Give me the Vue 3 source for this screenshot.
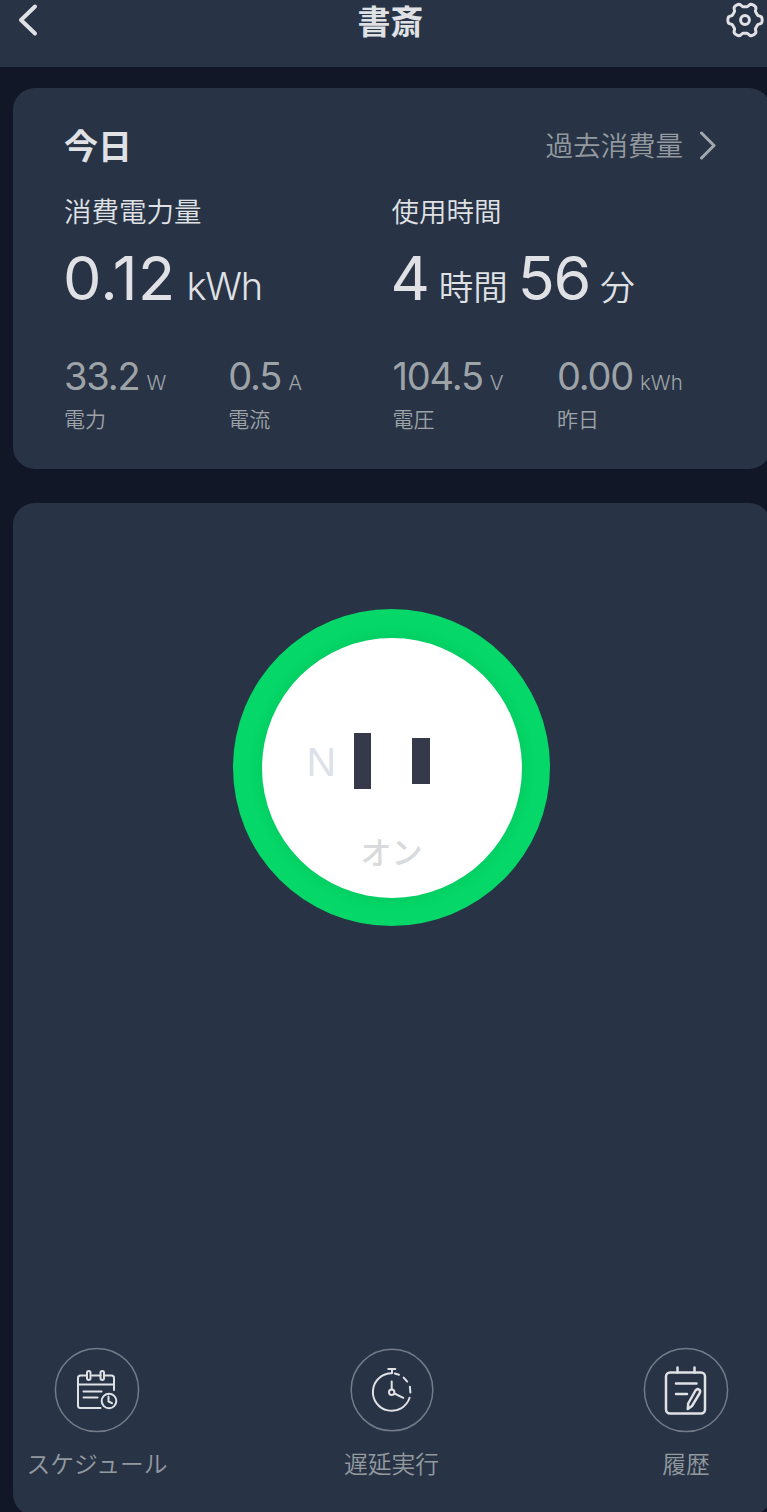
<script setup>
const today = [
  { label: '消費電力量', parts: [{ value: '0.12', unit: 'kWh' }] },
  { label: '使用時間', parts: [{ value: '4', unit: '時間', cjk: true }, { value: '56', unit: '分', cjk: true }] },
]

const stats = [
  { value: '33.2', unit: 'W', label: '電力' },
  { value: '0.5', unit: 'A', label: '電流' },
  { value: '104.5', unit: 'V', label: '電圧' },
  { value: '0.00', unit: 'kWh', label: '昨日' },
]

// Six-toothed gear outline, teeth at 0°, 60°, 120°…
const gear = Array.from({ length: 120 }, (_, i) => {
  const a = (i / 120) * Math.PI * 2
  const r = 15.2 + 1.9 * (Math.tanh(2.2 * Math.cos(6 * a)) / Math.tanh(2.2))
  return `${(20 + r * Math.cos(a)).toFixed(2)},${(20 + r * Math.sin(a)).toFixed(2)}`
}).join(' ')
</script>

<template>
  <div class="screen">
    <header class="bar">
      <svg class="back" width="24" height="36" viewBox="0 0 24 36"><path d="M19 5.500 5 19 19 32.500" /></svg>
      <h1>書斎</h1>
      <svg class="gear" width="40" height="40" viewBox="0 0 40 40">
        <polygon :points="gear" />
        <circle cx="20" cy="20" r="4.4" />
      </svg>
    </header>

    <section class="card usage">
      <div class="head">
        <h2>今日</h2>
        <div class="past">
          <span>過去消費量</span>
          <svg width="18" height="30" viewBox="0 0 18 30"><path d="M2.5 3 15 15.5 2.5 28" /></svg>
        </div>
      </div>
      <div class="today">
        <div v-for="t in today" :key="t.label">
          <div class="label">{{ t.label }}</div>
          <div class="big">
            <template v-for="p in t.parts" :key="p.unit">
              <span class="num" :class="{ tight: p.cjk }">{{ p.value }}</span><span class="unit" :class="{ cjk: p.cjk }">{{ p.unit }}</span>
            </template>
          </div>
        </div>
      </div>
      <div class="stats">
        <div v-for="s in stats" :key="s.label">
          <div class="reading"><span class="num">{{ s.value }}</span><span class="unit">{{ s.unit }}</span></div>
          <div class="name">{{ s.label }}</div>
        </div>
      </div>
    </section>

    <section class="card control">
      <div class="ring">
        <div class="plug">
          <div class="slots">
            <span class="neutral">N</span>
            <i class="slot tall"></i>
            <i class="slot"></i>
          </div>
          <div class="state">オン</div>
        </div>
      </div>

      <nav class="actions">
        <div class="action">
          <svg width="86" height="86" viewBox="0 0 86 86">
            <circle class="rim" cx="43" cy="43" r="41.6" />
            <g class="ink">
              <path d="M32 28.5h-5.500a2.500 2.500 0 0 0-2.500 2.500v27.500a2.500 2.500 0 0 0 2.500 2.500h20M38 28.500h8.500M51.500 28.500h6a2.500 2.500 0 0 1 2.500 2.500v12M24 37.500h36M29.500 44.500h18M29.500 50.500h14" />
              <rect x="33" y="24" width="3.500" height="9" rx="1.750" />
              <rect x="46.500" y="24" width="3.500" height="9" rx="1.750" />
              <circle cx="55" cy="54" r="7.300" />
              <path d="M54.500 49.500v5l3.500 1.700" />
            </g>
          </svg>
          <span>スケジュール</span>
        </div>
        <div class="action">
          <svg width="86" height="86" viewBox="0 0 86 86">
            <circle class="rim" cx="43" cy="43" r="40.800" />
            <g class="ink">
              <path d="M42.700 26.200A18.800 18.800 0 1 0 60.600 50.800" />
              <path d="M45.800 26.500 50 27.700M54.700 30.600 58.200 34.600M60.900 39.800 61.400 45.500" />
              <path d="M39.300 22h7M43 22v4M42.700 34.500v8M45.400 46.500 54.300 50.800" />
              <circle cx="42.700" cy="45.200" r="2.700" />
            </g>
          </svg>
          <span>遅延実行</span>
        </div>
        <div class="action">
          <svg width="86" height="86" viewBox="0 0 86 86">
            <circle class="rim" cx="43" cy="43" r="41.600" />
            <g class="ink bold">
              <rect x="23" y="25.500" width="39" height="41" rx="4" />
              <path d="M34.500 20.500v5M51.500 20.500v5M33 36.500h20.500M33 47h11" />
              <path d="M52.500 43.500q1.800-2.200 3.800-.8 1.600 1.300.2 3.800l-7.500 12.500-4.200 3 .4-5.500z" />
            </g>
          </svg>
          <span>履歴</span>
        </div>
      </nav>
    </section>
  </div>
</template>

<style>
html, body { margin: 0; background: #121727; }
</style>

<style scoped>
.screen {
  width: 767px; height: 1512px; overflow: hidden; background: #121727; color: #dfe1e5;
  font-family: Inter, "Noto Sans CJK JP", sans-serif;
}
svg { display: block; flex: none; fill: none; stroke: #dfe1e5; stroke-linecap: round; stroke-linejoin: round; }
h1, h2 { margin: 0; font-family: "Liberation Sans", "Noto Sans CJK JP", sans-serif; font-weight: 700; }
.bar {
  height: 67px; box-sizing: border-box; padding: 0 2px 0 16px; background: #293346;
  display: grid; grid-template-columns: 1fr auto 1fr; align-items: start;
}
.bar h1 { font-size: 33px; line-height: 38px; padding-top: 4px; }
.back { margin-top: 1px; stroke-width: 4; }
.gear { justify-self: end; stroke-width: 3; }
.card { width: 758px; box-sizing: border-box; margin-left: 13px; border-radius: 22px; background: #293346; }
.usage { height: 381px; margin-top: 21px; padding: 32px 50px 0 51px; }
.head { display: flex; justify-content: space-between; align-items: center; height: 50px; }
.head h2 { font-size: 34px; line-height: 50px; padding-top: 3px; }
.past { display: flex; align-items: center; gap: 16px; font-size: 27.5px; font-weight: 350; color: #929a9f; margin-right: 4px; }
.past span { line-height: 40px; padding-top: 1px; }
.past svg { stroke: #a2a9ae; stroke-width: 3; }
.today { display: grid; grid-template-columns: 327.500px 1fr; margin-top: 22px; }
.label { font-size: 27.5px; line-height: 40px; font-weight: 350; }
.big { display: flex; align-items: baseline; line-height: 70px; margin: 11px 0 0 -1px; height: 70px; white-space: nowrap; }
.big .num { font-size: 61px; letter-spacing: .3px; }
.big .num.tight { letter-spacing: -1.200px; }
.big .unit { font-size: 38px; font-weight: 350; letter-spacing: -1.200px; margin: 0 10px 0 11px; }
.big .unit.cjk { font-size: 34.5px; letter-spacing: 0; margin: 0 10px; }
.stats { display: grid; grid-template-columns: repeat(4, 164.3px); margin-top: 40px; color: #9da3a6; }
.reading { display: flex; align-items: baseline; line-height: 46px; height: 46px; }
.reading .num { font-size: 38px; letter-spacing: -1.200px; }
.reading .unit { font-size: 20.500px; margin-left: 7px; font-weight: 350; }
.name { font-size: 21px; line-height: 30px; margin-top: 6px; font-weight: 350; }
.control {
  height: 1013px; margin-top: 34px; padding-top: 106px;
  display: flex; flex-direction: column; align-items: center;
}
.ring {
  width: 317px; height: 317px; border-radius: 50%; background: #05d768; margin-right: 1px;
  display: flex; align-items: center; justify-content: center;
}
.plug {
  width: 260px; height: 260px; border-radius: 50%; background: #fff; box-shadow: 0 0 14px rgba(0, 90, 40, .14);
  display: flex; flex-direction: column;
}
.slots { display: flex; align-items: center; height: 56px; margin: 95px 0 0 45px; }
.neutral { width: 47px; padding-top: 3px; font: 400 41px "Liberation Sans", sans-serif; color: #dde2ea; }
.slot { width: 17.500px; height: 46px; background: #353949; }
.slot.tall { height: 56px; margin-right: 41px; }
.state { text-align: center; margin-top: 40px; font: 500 31px/44px "Noto Sans CJK JP", sans-serif; color: #d9dadb; }
.actions { align-self: stretch; display: flex; justify-content: space-between; margin: 421px 14px 0 13px; }
.action { display: flex; flex-direction: column; align-items: center; width: 142px; font-size: 23.800px; line-height: 34px; font-weight: 350; color: #929a9f; white-space: nowrap; }
.action span { margin-top: 15px; }
.rim { stroke: #737b87; stroke-width: 1.500; }
.ink { stroke-width: 2; }
.ink.bold { stroke-width: 2.500; }
</style>
